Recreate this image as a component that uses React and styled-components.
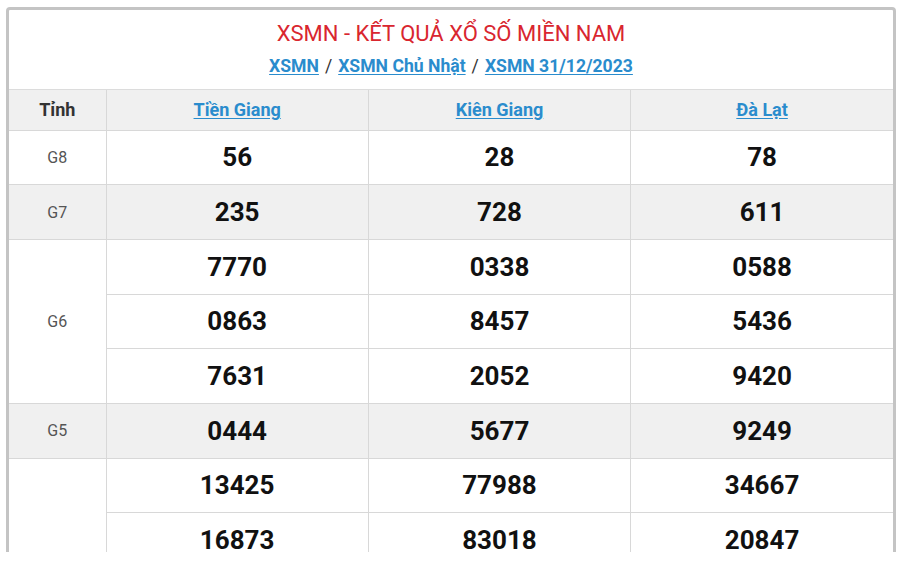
import React from 'react';
import styled, { createGlobalStyle } from 'styled-components';

const GlobalStyle = createGlobalStyle`
  * { box-sizing: border-box; }
  body {
    margin: 0;
    background: #fff;
    font-family: Roboto, "Liberation Sans", Arial, sans-serif;
  }
`;

const Page = styled.div`
  height: 552px;
  overflow: hidden;
  padding: 7px 4px 0 6px;
`;

const Box = styled.div`
  border: 3px solid #c4c4c4;
  border-radius: 4px;
  background: #fff;
`;

const Head = styled.div`
  height: 80px;
  display: flex;
  flex-direction: column;
  align-items: center;
  padding-top: 9px;
  border-bottom: 1px solid #dcdcdc;
`;

const Title = styled.h1`
  margin: 0;
  font-size: 22px;
  font-weight: 400;
  color: #d9262f;
  line-height: 30px;
`;

const Crumbs = styled.div`
  margin-top: 5px;
  font-size: 17.6px;
  line-height: 24px;
  color: #444;
  font-weight: 700;
`;

const Link = styled.a`
  color: #2a8ccd;
  text-decoration: underline;
  text-underline-offset: 2px;
  font-weight: 700;
`;

const Sep = styled.span`
  margin: 0 6px;
  font-weight: 400;
  color: #333;
`;

const Table = styled.table`
  width: 100%;
  border-collapse: collapse;
  table-layout: fixed;
`;

const Th = styled.th`
  height: 40px;
  background: #f0f0f0;
  border-right: 1px solid #d8d8d8;
  border-bottom: 1px solid #d8d8d8;
  font-size: 18px;
  font-weight: 700;
  color: #333;
  text-align: center;
  &:last-child { border-right: none; }
`;

const Row = styled.tr`
  background: ${p => (p.$alt ? '#f0f0f0' : '#fff')};
`;

const Label = styled.td`
  border-right: 1px solid #d8d8d8;
  border-bottom: 1px solid #d8d8d8;
  text-align: center;
  font-size: 16px;
  color: #555;
`;

const Num = styled.td`
  height: 54.7px;
  border-right: 1px solid #d8d8d8;
  border-bottom: 1px solid #d8d8d8;
  text-align: center;
  font-size: 26px;
  font-weight: 700;
  color: #111;
  &:last-child { border-right: none; }
`;

const provinces = ['Tiền Giang', 'Kiên Giang', 'Đà Lạt'];

const prizes = [
  { name: 'G8', rows: [['56', '28', '78']] },
  { name: 'G7', rows: [['235', '728', '611']] },
  {
    name: 'G6',
    rows: [
      ['7770', '0338', '0588'],
      ['0863', '8457', '5436'],
      ['7631', '2052', '9420'],
    ],
  },
  { name: 'G5', rows: [['0444', '5677', '9249']] },
  {
    name: 'G4',
    rows: [
      ['13425', '77988', '34667'],
      ['16873', '83018', '20847'],
      ['52419', '61370', '09852'],
      ['38604', '47215', '71936'],
      ['90127', '25593', '48301'],
      ['64058', '19742', '56284'],
      ['21796', '03861', '87120'],
    ],
  },
];

export default function App() {
  return (
    <>
      <GlobalStyle />
      <Page>
        <Box>
          <Head>
            <Title>XSMN - KẾT QUẢ XỔ SỐ MIỀN NAM</Title>
            <Crumbs>
              <Link href="#">XSMN</Link>
              <Sep>/</Sep>
              <Link href="#">XSMN Chủ Nhật</Link>
              <Sep>/</Sep>
              <Link href="#">XSMN 31/12/2023</Link>
            </Crumbs>
          </Head>
          <Table>
            <colgroup>
              <col style={{ width: '97px' }} />
              <col />
              <col />
              <col />
            </colgroup>
            <thead>
              <tr>
                <Th>Tỉnh</Th>
                {provinces.map(p => (
                  <Th key={p}>
                    <Link href="#">{p}</Link>
                  </Th>
                ))}
              </tr>
            </thead>
            <tbody>
              {prizes.map((prize, i) =>
                prize.rows.map((r, j) => (
                  <Row key={prize.name + j} $alt={i % 2 === 1}>
                    {j === 0 && <Label rowSpan={prize.rows.length}>{prize.name}</Label>}
                    {r.map((n, k) => (
                      <Num key={k}>{n}</Num>
                    ))}
                  </Row>
                ))
              )}
            </tbody>
          </Table>
        </Box>
      </Page>
    </>
  );
}
